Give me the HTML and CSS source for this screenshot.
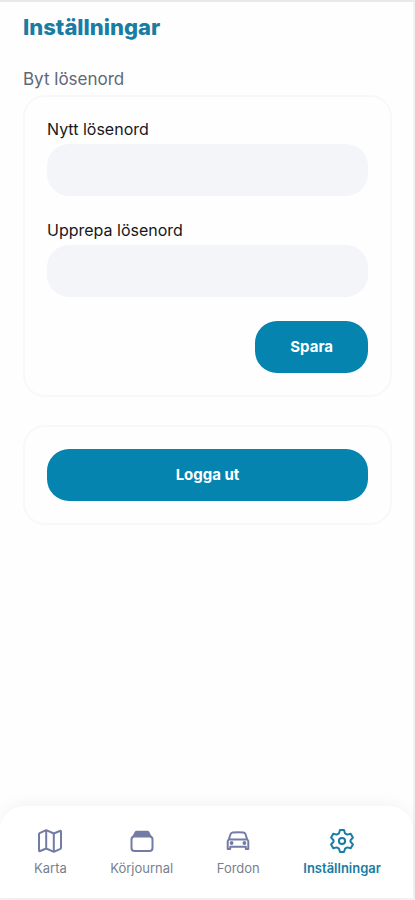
FILE: index.html
```html
<!DOCTYPE html>
<html lang="sv">
<head>
<meta charset="utf-8">
<meta name="viewport" content="width=device-width, initial-scale=1">
<title>Inställningar</title>
<link rel="stylesheet" href="styles.css">
</head>
<body>
<div class="app">
  <main class="content">
    <h1 class="title">Inställningar</h1>
    <h2 class="subtitle">Byt lösenord</h2>
    <form class="card">
      <div class="field">
        <label for="new-password">Nytt lösenord</label>
        <input id="new-password" type="password">
      </div>
      <div class="field">
        <label for="repeat-password">Upprepa lösenord</label>
        <input id="repeat-password" type="password">
      </div>
      <button class="button save" type="button">Spara</button>
    </form>
    <section class="card">
      <button class="button" type="button">Logga ut</button>
    </section>
  </main>
  <nav class="tabs">
    <a class="tab" href="#karta">
      <svg viewBox="0 0 24 24" aria-hidden="true"><path d="M8.200 1.200 1.600 4.200Q1 4.500 1 5.200V21.200Q1 22.600 2.200 22L8.200 19.500 15.800 22.800 22.400 19.800Q23 19.500 23 18.800V2.800Q23 1.400 21.800 2L15.800 4.500ZM8.200 1.200V19.500M15.800 4.500V22.800"/></svg>
      <span>Karta</span>
    </a>
    <a class="tab" href="#korjournal">
      <svg viewBox="0 0 24 24" aria-hidden="true"><rect x="1.500" y="7.500" width="21" height="14.500" rx="3"/><path class="solid" d="M6.500 1.800H17.500Q18.600 1.800 19.200 2.800L22 8H2L4.800 2.800Q5.400 1.800 6.500 1.800Z"/></svg>
      <span>Körjournal</span>
    </a>
    <a class="tab" href="#fordon">
      <svg viewBox="0 0 24 24" aria-hidden="true"><path d="M2.800 10.500 4.600 5Q5.200 3.500 6.800 3.400 12 3 17.200 3.400 18.800 3.500 19.400 5L21.200 10.500M2.800 10.500H21.200Q22.300 11.300 22.300 12.800V20H19.800V17.800H4.200V20H1.700V12.800Q1.700 11.300 2.800 10.500Z"/><circle class="solid" cx="5.600" cy="14" r="1.900"/><circle class="solid" cx="18.400" cy="14" r="1.900"/></svg>
      <span>Fordon</span>
    </a>
    <a class="tab active" href="#installningar" aria-current="page">
      <svg viewBox="0 0 24 24" aria-hidden="true"><path d="M10 1H14L15 4.300 17.300 5.600 20.700 4.800 22.900 8.600 20.500 11.200V12.800L22.900 15.400 20.700 19.200 17.300 18.400 15 19.700 14 23H10L9 19.700 6.700 18.400 3.300 19.200 1.100 15.400 3.500 12.800V11.200L1.100 8.600 3.300 4.800 6.700 5.600 9 4.300Z"/><circle cx="12" cy="12" r="3.100"/></svg>
      <span>Inställningar</span>
    </a>
  </nav>
</div>
</body>
</html>
```

FILE: styles.css
```css
* {
  box-sizing: border-box;
}

body {
  margin: 0;
  font-family: Inter, "Liberation Sans", sans-serif;
  background: #fefefe;
  color: #171720;
}

.app {
  display: flex;
  flex-direction: column;
  min-height: 100vh;
  border-top: 2px solid #e9e9e9;
  border-right: 2px solid #f1f1f1;
  border-bottom: 2px solid #f1f1f1;
}

.content {
  flex: 1;
  display: flex;
  flex-direction: column;
  padding: 9px 21px 0 23px;
}

.title {
  margin: 0 0 26px;
  font-size: 22px;
  line-height: 32px;
  font-weight: 800;
  color: #187ca3;
}

.subtitle {
  margin: 0 0 6px;
  font-size: 17px;
  line-height: 20px;
  font-weight: 400;
  color: #606775;
}

.card {
  display: flex;
  flex-direction: column;
  gap: 24px;
  margin-bottom: 28px;
  padding: 22px;
  border: 2px solid #f7f8f9;
  border-radius: 22px;
}

.field {
  display: flex;
  flex-direction: column;
  gap: 5px;
}

.field label {
  font-size: 16px;
  line-height: 20px;
  font-weight: 400;
}

.field input {
  width: 100%;
  height: 52px;
  padding: 0 20px;
  border: 0;
  border-radius: 22px;
  background: #f3f5f9;
  font: inherit;
}

.button {
  height: 52px;
  padding: 0 35px;
  border: 0;
  border-radius: 22px;
  background: #0484af;
  color: #fff;
  font: 700 15px/20px Inter, "Liberation Sans", sans-serif;
}

.save {
  align-self: flex-end;
}

.tabs {
  display: flex;
  justify-content: space-between;
  padding: 23px 32px 21px 34px;
  border-radius: 24px 24px 0 0;
  background: #fff;
  box-shadow: 0 -4px 14px rgba(0, 0, 0, 0.04);
}

.tab {
  display: flex;
  flex-direction: column;
  align-items: center;
  gap: 6px;
  color: #777f8e;
  font-size: 13px;
  font-weight: 400;
  line-height: 18px;
  text-decoration: none;
}

.tab svg {
  width: 24px;
  height: 24px;
  fill: none;
  stroke: #737ca5;
  stroke-width: 2;
  stroke-linecap: round;
  stroke-linejoin: round;
}

.tab .solid {
  fill: #737ca5;
  stroke: none;
}

.active {
  color: #187ca3;
  font-weight: 600;
}

.active svg {
  stroke: #187ca3;
}
```
